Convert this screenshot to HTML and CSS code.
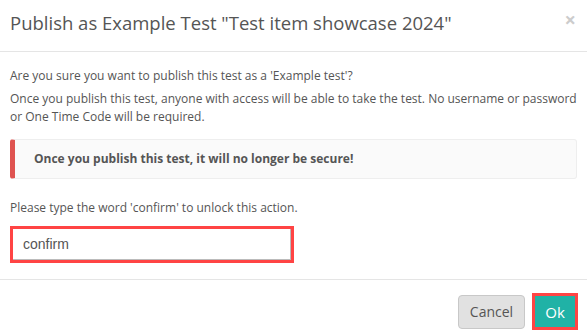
FILE: index.html
```html
<html>
<head>
<title>Publish as Example Test</title>
<meta http-equiv="Content-Type" content="text/html; charset=utf-8"/>
<link rel="stylesheet" href="styles.css">
</head>
<body>
<div class="modal">
    <div class="modal-header">
        <h4 class="modal-title">Publish as Example Test "Test item showcase 2024"</h4>
        <span class="close">&times;</span>
    </div>
    <div class="modal-body">
        <p>Are you sure you want to publish this test as a 'Example test'?</p>
        <p>Once you publish this test, anyone with access will be able to take the test. No username or password or One Time Code will be required.</p>
        <div class="callout">Once you publish this test, it will no longer be secure!</div>
        <p class="hint">Please type the word 'confirm' to unlock this action.</p>
        <div class="input-wrap"><input type="text" class="confirm-input" value="confirm"></div>
    </div>
    <div class="modal-footer">
        <button class="btn btn-default">Cancel</button>
        <button class="btn btn-ok">Ok</button>
    </div>
</div>
</body>
</html>
```

FILE: styles.css
```css
body {
    margin:0;
    background:#fff;
    font-family:"Open Sans", "Liberation Sans", sans-serif;
    color:#555;
}
.modal {
    width:587px;
    height:336px;
}
.modal-header {
    display:flex;
    align-items:center;
    justify-content:space-between;
    height:45px;
    padding:0 11px 6px 10px;
    border-bottom:solid 1px #e5e5e5;
}
.modal-title {
    margin:0;
    font-size:18.5px;
    font-weight:normal;
    color:#555;
}
.close {
    font-size:20px;
    font-weight:bold;
    color:#ccc;
    margin-top:-6px;
}
.modal-body {
    padding:15px 10px 16px 10px;
    font-size:12px;
}
.modal-body p {
    margin:0 0 5px 0;
    line-height:18px;
}
.callout {
    margin:13px 0 20px 0;
    height:38px;
    line-height:38px;
    padding-left:19px;
    background:#fafafa;
    border:solid 1px #eee;
    border-left:solid 5px #df5350;
    border-radius:3px;
    font-weight:bold;
}
.modal-body .hint {
    margin-bottom:9px;
}
.input-wrap {
    width:278px;
    border:solid 3px #f44;
}
.confirm-input {
    display:block;
    width:100%;
    height:31px;
    box-sizing:border-box;
    border:none;
    border-right:solid 1px #bbb;
    border-bottom:solid 1px #bbb;
    padding:0 10px;
    font-family:"Liberation Sans", Arial, sans-serif;
    font-size:14px;
    color:#555;
    outline:none;
}
.modal-footer {
    display:flex;
    justify-content:flex-end;
    align-items:center;
    gap:7px;
    padding:13px 9px 0 0;
    border-top:solid 1px #e5e5e5;
}
.btn {
    font-family:"Open Sans", "Liberation Sans", sans-serif;
    font-size:14px;
    border-radius:4px;
    cursor:pointer;
}
.btn-default {
    width:67px;
    height:34px;
    background:#e1e1e1;
    border:solid 1px #c8c8c8;
    color:#555;
}
.btn-ok {
    width:46px;
    height:37px;
    background:#20b2a6;
    color:#fff;
    border:solid 3px #f44;
    border-radius:0;
    font-size:15px;
}
```
